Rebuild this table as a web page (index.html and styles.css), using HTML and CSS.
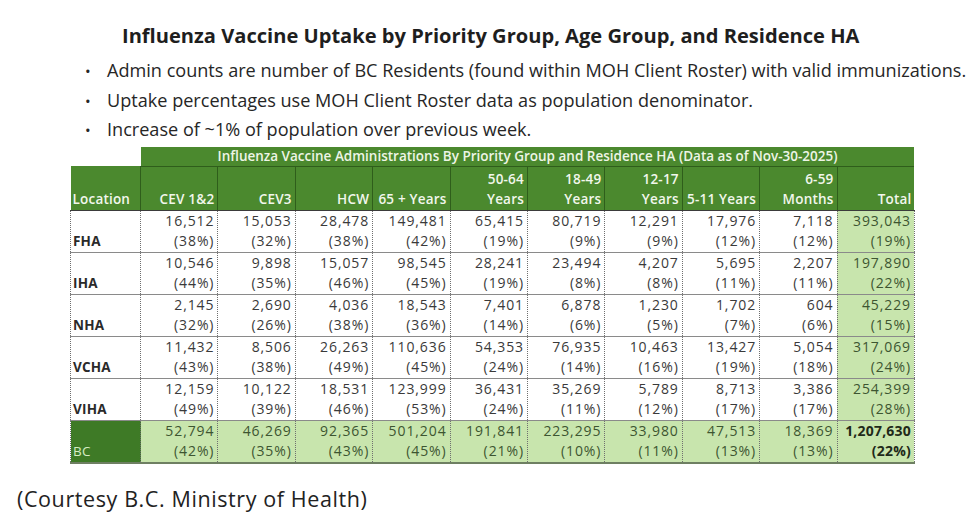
FILE: index.html
```html
<!DOCTYPE html>
<html>
<head>
<meta charset="utf-8">
<link rel="stylesheet" href="styles.css">
</head>
<body>
<div class="page">
  <h1 class="title">Influenza Vaccine Uptake by Priority Group, Age Group, and Residence HA</h1>
  <ul class="notes">
    <li>Admin counts are number of BC Residents (found within MOH Client Roster) with valid immunizations.</li>
    <li>Uptake percentages use MOH Client Roster data as population denominator.</li>
    <li>Increase of ~1% of population over previous week.</li>
  </ul>
  <table class="data">
    <colgroup>
      <col class="c-loc"><col><col><col><col><col><col><col><col><col><col>
    </colgroup>
    <thead>
      <tr class="group-row">
        <th class="blank"></th>
        <th colspan="10" class="group">Influenza Vaccine Administrations By Priority Group and Residence HA (Data as of Nov-30-2025)</th>
      </tr>
      <tr class="head-row">
        <th class="loc">Location</th>
        <th>CEV 1&amp;2</th>
        <th>CEV3</th>
        <th>HCW</th>
        <th>65 + Years</th>
        <th>50-64<br>Years</th>
        <th>18-49<br>Years</th>
        <th>12-17<br>Years</th>
        <th>5-11 Years</th>
        <th>6-59<br>Months</th>
        <th>Total</th>
      </tr>
    </thead>
    <tbody>
      <tr>
        <td class="loc">FHA</td>
        <td>16,512<br>(38%)</td><td>15,053<br>(32%)</td><td>28,478<br>(38%)</td><td>149,481<br>(42%)</td><td>65,415<br>(19%)</td><td>80,719<br>(9%)</td><td>12,291<br>(9%)</td><td>17,976<br>(12%)</td><td>7,118<br>(12%)</td>
        <td class="tot">393,043<br>(19%)</td>
      </tr>
      <tr>
        <td class="loc">IHA</td>
        <td>10,546<br>(44%)</td><td>9,898<br>(35%)</td><td>15,057<br>(46%)</td><td>98,545<br>(45%)</td><td>28,241<br>(19%)</td><td>23,494<br>(8%)</td><td>4,207<br>(8%)</td><td>5,695<br>(11%)</td><td>2,207<br>(11%)</td>
        <td class="tot">197,890<br>(22%)</td>
      </tr>
      <tr>
        <td class="loc">NHA</td>
        <td>2,145<br>(32%)</td><td>2,690<br>(26%)</td><td>4,036<br>(38%)</td><td>18,543<br>(36%)</td><td>7,401<br>(14%)</td><td>6,878<br>(6%)</td><td>1,230<br>(5%)</td><td>1,702<br>(7%)</td><td>604<br>(6%)</td>
        <td class="tot">45,229<br>(15%)</td>
      </tr>
      <tr>
        <td class="loc">VCHA</td>
        <td>11,432<br>(43%)</td><td>8,506<br>(38%)</td><td>26,263<br>(49%)</td><td>110,636<br>(45%)</td><td>54,353<br>(24%)</td><td>76,935<br>(14%)</td><td>10,463<br>(16%)</td><td>13,427<br>(19%)</td><td>5,054<br>(18%)</td>
        <td class="tot">317,069<br>(24%)</td>
      </tr>
      <tr>
        <td class="loc">VIHA</td>
        <td>12,159<br>(49%)</td><td>10,122<br>(39%)</td><td>18,531<br>(46%)</td><td>123,999<br>(53%)</td><td>36,431<br>(24%)</td><td>35,269<br>(11%)</td><td>5,789<br>(12%)</td><td>8,713<br>(17%)</td><td>3,386<br>(17%)</td>
        <td class="tot">254,399<br>(28%)</td>
      </tr>
      <tr class="bc-row">
        <td class="loc bc">BC</td>
        <td>52,794<br>(42%)</td><td>46,269<br>(35%)</td><td>92,365<br>(43%)</td><td>501,204<br>(45%)</td><td>191,841<br>(21%)</td><td>223,295<br>(10%)</td><td>33,980<br>(11%)</td><td>47,513<br>(13%)</td><td>18,369<br>(13%)</td>
        <td class="tot grand">1,207,630<br>(22%)</td>
      </tr>
    </tbody>
  </table>
  <p class="caption">(Courtesy B.C. Ministry of Health)</p>
</div>
</body>
</html>
```
FILE: styles.css
```css
html, body {
  margin: 0;
  padding: 0;
  background: #ffffff;
}

.page {
  width: 975px;
  height: 528px;
  overflow: hidden;
  font-family: "Open Sans", "DejaVu Sans", sans-serif;
  color: #222;
}

.title {
  margin: 25px 0 0 0;
  padding-left: 122px;
  font-size: 20.1px;
  line-height: 22px;
  font-weight: 700;
  color: #1e1e1e;
  white-space: nowrap;
}

.notes {
  list-style: none;
  margin: 9px 0 0 0;
  padding: 0 0 0 85px;
}

.notes li {
  font-size: 18.1px;
  line-height: 28.5px;
  color: #262626;
  white-space: nowrap;
}

.notes li::before {
  content: "•";
  display: inline-block;
  width: 22px;
  font-size: 15px;
}

.data {
  margin: 2px 0 0 70px;
  border-collapse: collapse;
  table-layout: fixed;
  width: 844px;
  font-family: "Open Sans", sans-serif;
  font-size: 14px;
  letter-spacing: 0.9px;
  line-height: 20.5px;
  color: #3a3a3a;
}

.data col { width: 77.4px; }
.data col.c-loc { width: 70px; }

.group-row th {
  height: 19px;
  padding: 0;
}

.group-row th.blank {
  background: transparent;
}

.group-row th.group {
  background: #4b892e;
  color: #eef5e6;
  font-size: 13.5px;
  letter-spacing: 0;
  font-weight: 600;
  text-align: center;
  line-height: 19px;
  border-bottom: 1px solid #2f5e1b;
  white-space: nowrap;
}

.head-row th {
  background: #4b892e;
  color: #f2f7ec;
  font-size: 13.5px;
  letter-spacing: 0.2px;
  font-weight: 600;
  line-height: 20px;
  height: 42px;
  padding: 0 3px 1px 0;
  text-align: right;
  vertical-align: bottom;
  border-left: 1px solid #2f5e1b;
  border-bottom: 1px solid #3b3b3b;
  white-space: nowrap;
}

.head-row th.loc {
  text-align: left;
  padding-left: 2px;
  border-left: none;
}

.data td {
  height: 40px;
  padding: 0 3px 0 0;
  text-align: right;
  vertical-align: middle;
  border: 1px dotted #6f6f6f;
  border-top: 1px solid #8a8a8a;
  background: #ffffff;
  white-space: nowrap;
}

.data td.loc {
  text-align: left;
  vertical-align: bottom;
  padding-left: 2px;
  font-weight: 700;
  font-size: 13.5px;
  letter-spacing: 0.2px;
  color: #2a2a2a;
}

.data td.tot {
  background: #c8e5ad;
  color: #3d5531;
}

.bc-row td {
  background: #c8e5ad;
  color: #3d5531;
  border-bottom: 2px solid #6e7f62;
}

.bc-row td.loc.bc {
  background: #3e7a26;
  color: #d6ecc4;
  font-weight: 500;
}

.data td.grand {
  font-weight: 700;
  letter-spacing: 0.2px;
  color: #1f2a19;
}

.caption {
  margin: 22px 0 0 17px;
  font-family: "Open Sans", Arial, sans-serif;
  font-size: 21.5px;
  letter-spacing: 0.6px;
  line-height: 26px;
  color: #222;
}
```
